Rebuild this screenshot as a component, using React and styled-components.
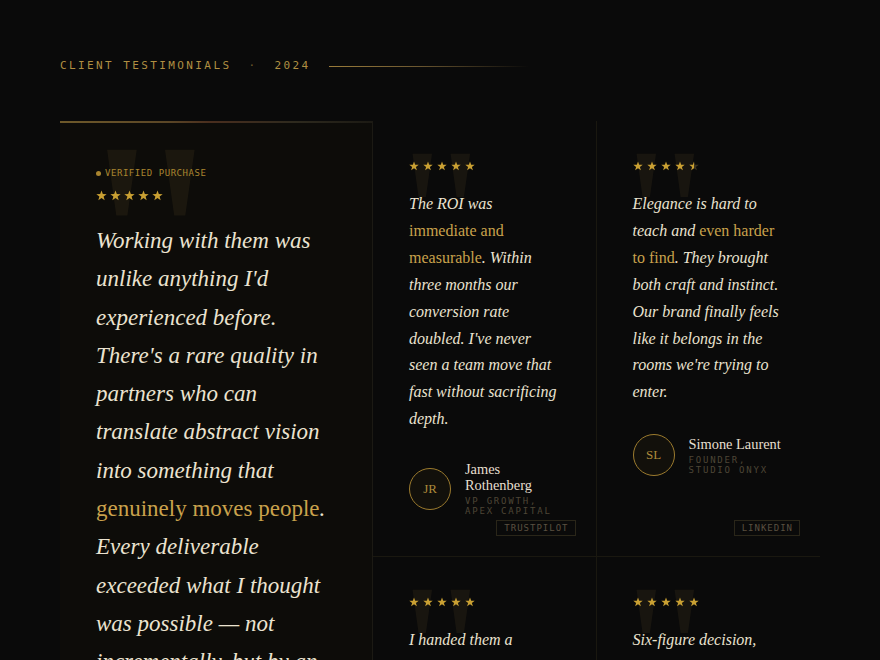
import React from "react";
import styled, { createGlobalStyle } from "styled-components";

const Global = createGlobalStyle`
  html, body { margin: 0; padding: 0; background: #0a0a0a; }
  body { font-family: "Liberation Serif", serif; -webkit-font-smoothing: antialiased; }
`;

const MONO = `"DejaVu Sans Mono", "Liberation Mono", monospace`;
const SERIF = `"Liberation Serif", "Times New Roman", serif`;

const Page = styled.main`
  padding: 59px 60px 60px;
  background: #0a0a0a;
  min-height: 100vh;
  box-sizing: border-box;
`;

const Header = styled.header`
  display: flex;
  align-items: center;
  gap: 16px;
  height: 14px;
  margin-bottom: 48px;
  font-family: ${MONO};
  font-size: 11px;
  line-height: 14px;
  letter-spacing: 2.4px;
  color: #b08f42;
  text-transform: uppercase;
`;

const HeaderDot = styled.span`
  color: #6e5a2c;
  padding: 0 1px;
`;

const HeaderRule = styled.span`
  display: block;
  width: 200px;
  height: 1px;
  margin-left: 2px;
  background: linear-gradient(90deg, #9a7c3a 0%, #6a5630 45%, rgba(60, 50, 30, 0) 100%);
`;

const Grid = styled.section`
  display: grid;
  grid-template-columns: 313px 1fr 1fr;
  grid-template-rows: auto auto;
`;

const Featured = styled.article`
  position: relative;
  grid-row: 1 / span 2;
  padding: 44px 36px 40px;
  background: #0d0c09;
  border-top: 2px solid transparent;
  border-image: linear-gradient(90deg, #6f5a2a 0%, #5a4626 35%, #4a2e1e 48%, #2e2a1e 75%, #1c1a14 100%) 1;
  border-right: 1px solid #1c1a12;
  border-image-slice: 1;
  border-left: 0;
  border-bottom: 0;
  overflow: hidden;
`;

const Card = styled.article`
  position: relative;
  padding: 40px 36px 40px;
  border-right: ${(p) => (p.$right ? "1px solid #1a1810" : "0")};
  border-bottom: ${(p) => (p.$bottom ? "1px solid #1a1810" : "0")};
  overflow: hidden;
`;

const QuoteMark = styled.span`
  position: absolute;
  top: ${(p) => (p.$big ? "-24px" : "0px")};
  left: ${(p) => (p.$big ? "28px" : "27px")};
  font-family: ${SERIF};
  font-size: ${(p) => (p.$big ? "280px" : "184px")};
  line-height: 1;
  color: rgba(201, 162, 74, 0.075);
  transform: scaleX(1.1);
  transform-origin: left top;
  pointer-events: none;
  user-select: none;
`;

const Content = styled.div`
  position: relative;
`;

const Verified = styled.div`
  display: flex;
  align-items: center;
  gap: 4px;
  font-family: ${MONO};
  font-size: 9px;
  line-height: 12px;
  letter-spacing: 0.55px;
  color: #a9852f;
  text-transform: uppercase;
`;

const VDot = styled.span`
  width: 5px;
  height: 5px;
  border-radius: 50%;
  background: #a9852f;
`;

const Stars = styled.div`
  display: flex;
  gap: ${(p) => (p.$big ? "3px" : "4px")};
  height: ${(p) => (p.$big ? "11px" : "10px")};
  margin-top: ${(p) => (p.$big ? "11px" : "0")};
`;

const Quote = styled.p`
  margin: ${(p) => (p.$big ? "21px" : "20px")} 0 0;
  font-family: ${SERIF};
  font-style: italic;
  font-size: ${(p) => (p.$big ? "23px" : "16px")};
  line-height: ${(p) => (p.$big ? "38.3px" : "26.9px")};
  color: #ebe3d0;
`;

const Hl = styled.span`
  font-style: normal;
  color: #c9a24c;
`;

const Author = styled.div`
  display: flex;
  align-items: center;
  gap: 14px;
  margin-top: 28px;
`;

const Avatar = styled.div`
  flex: none;
  width: 40px;
  height: 40px;
  border-radius: 50%;
  border: 1px solid #9c7b2e;
  background: #12100b;
  display: flex;
  align-items: center;
  justify-content: center;
  font-family: ${SERIF};
  font-size: 13px;
  color: #ad8a3a;
`;

const Who = styled.div`
  min-width: 0;
`;

const Name = styled.div`
  font-family: ${SERIF};
  font-size: 14.4px;
  line-height: 16px;
  color: #e6dfcf;
`;

const Role = styled.div`
  margin-top: 3px;
  font-family: ${MONO};
  font-size: 9px;
  line-height: 10px;
  letter-spacing: 1.8px;
  color: #4e4636;
  text-transform: uppercase;
`;

const Badge = styled.span`
  position: absolute;
  right: 20px;
  bottom: 20px;
  padding: 1px 6px 1px 7px;
  border: 1px solid #2a2619;
  font-family: ${MONO};
  font-size: 9px;
  line-height: 12px;
  letter-spacing: 1px;
  color: #5a5040;
  text-transform: uppercase;
`;

const STAR = "M5 0.4 L6.2 3.7 L9.7 3.8 L6.9 5.9 L7.9 9.3 L5 7.3 L2.1 9.3 L3.1 5.9 L0.3 3.8 L3.8 3.7 Z";

function Star({ size, fill }) {
  const id = React.useId();
  return (
    <svg width={size} height={size} viewBox="0 0 10 10" aria-hidden="true">
      {fill === 0.5 && (
        <defs>
          <linearGradient id={id} x1="0" x2="1" y1="0" y2="0">
            <stop offset="50%" stopColor="#c9a033" />
            <stop offset="50%" stopColor="#3a321f" />
          </linearGradient>
        </defs>
      )}
      <path d={STAR} fill={fill === 0.5 ? `url(#${id})` : "#c9a033"} />
    </svg>
  );
}

function Rating({ value, big }) {
  const size = big ? 11 : 10;
  return (
    <Stars $big={big}>
      {[0, 1, 2, 3, 4].map((i) => (
        <Star key={i} size={size} fill={value - i >= 1 ? 1 : 0.5} />
      ))}
    </Stars>
  );
}

const cards = [
  {
    rating: 5,
    quote: (
      <>
        The ROI was <Hl>immediate and measurable</Hl>. Within three months our conversion rate doubled. I've never
        seen a team move that fast without sacrificing depth.
      </>
    ),
    initials: "JR",
    name: "James Rothenberg",
    role: "VP Growth, Apex Capital",
    source: "Trustpilot",
    right: true,
    bottom: true,
  },
  {
    rating: 4.5,
    quote: (
      <>
        Elegance is hard to teach and <Hl>even harder to find</Hl>. They brought both craft and instinct. Our brand
        finally feels like it belongs in the rooms we're trying to enter.
      </>
    ),
    initials: "SL",
    name: "Simone Laurent",
    role: "Founder, Studio Onyx",
    source: "LinkedIn",
    right: false,
    bottom: true,
  },
  {
    rating: 5,
    quote: (
      <>
        I handed them a seemingly impossible brief and a tight deadline. What came back was a{" "}
        <Hl>complete identity system</Hl>, ready to launch and impossible to ignore.
      </>
    ),
    initials: "MK",
    name: "Marcus Kade",
    role: "CEO, Northline",
    source: "Clutch",
    right: true,
    bottom: false,
  },
  {
    rating: 5,
    quote: (
      <>
        Six-figure decision, handled with <Hl>zero regrets</Hl>. Every milestone landed on time and every detail was
        considered twice. We've already signed on for the next phase.
      </>
    ),
    initials: "AH",
    name: "Ana Halvorsen",
    role: "CMO, Fjord Labs",
    source: "Google",
    right: false,
    bottom: false,
  },
];

export default function App() {
  return (
    <>
      <Global />
      <Page>
        <Header>
          <span>Client Testimonials</span>
          <HeaderDot>·</HeaderDot>
          <span>2024</span>
          <HeaderRule />
        </Header>
        <Grid>
          <Featured>
            <QuoteMark $big>"</QuoteMark>
            <Content>
              <Verified>
                <VDot />
                Verified Purchase
              </Verified>
              <Rating value={5} big />
              <Quote $big>
                Working with them was unlike anything I'd experienced before. There's a rare quality in partners who can
                translate abstract vision into something that <Hl>genuinely moves people</Hl>. Every deliverable
                exceeded what I thought was possible — not incrementally, but by an order of magnitude.
              </Quote>
              <Author>
                <Avatar>EV</Avatar>
                <Who>
                  <Name>Eleanor Vance</Name>
                  <Role>CMO, Meridian Group</Role>
                </Who>
              </Author>
            </Content>
          </Featured>
          {cards.map((c) => (
            <Card key={c.name} $right={c.right} $bottom={c.bottom}>
              <QuoteMark>"</QuoteMark>
              <Content>
                <Rating value={c.rating} />
                <Quote>{c.quote}</Quote>
                <Author>
                  <Avatar>{c.initials}</Avatar>
                  <Who>
                    <Name>{c.name}</Name>
                    <Role>{c.role}</Role>
                  </Who>
                </Author>
              </Content>
              <Badge>{c.source}</Badge>
            </Card>
          ))}
        </Grid>
      </Page>
    </>
  );
}
